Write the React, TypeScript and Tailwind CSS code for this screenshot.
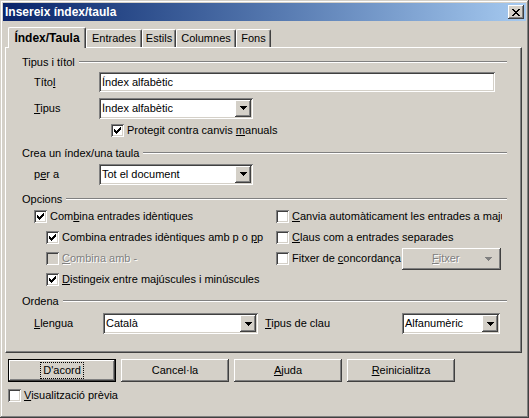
import type { ReactNode } from "react";

const font = "font-['Liberation_Sans',Arial,sans-serif] text-[11px] leading-none text-black";
const raised =
  "bg-[#d4d0c8] shadow-[inset_-1px_-1px_#404040,inset_1px_1px_#ffffff,inset_-2px_-2px_#808080,inset_2px_2px_#d4d0c8]";
const sunken =
  "shadow-[inset_1px_1px_#808080,inset_-1px_-1px_#ffffff,inset_2px_2px_#404040,inset_-2px_-2px_#d4d0c8]";
const etched = "text-[#808080] [text-shadow:1px_1px_0_#ffffff]";

function U({ children }: { children: ReactNode }) {
  return <span className="underline underline-offset-[1px]">{children}</span>;
}

function Check({ checked = false, disabled = false }: { checked?: boolean; disabled?: boolean }) {
  const px: [number, number][] = [
    [6, 0], [5, 1], [6, 1], [0, 2], [4, 2], [5, 2], [6, 2], [0, 3], [1, 3], [3, 3], [4, 3], [5, 3],
    [0, 4], [1, 4], [2, 4], [3, 4], [4, 4], [1, 5], [2, 5], [3, 5], [2, 6],
  ];
  return (
    <div className={`w-[13px] h-[13px] shrink-0 flex items-center justify-center ${sunken} ${disabled ? "bg-[#d4d0c8]" : "bg-white"}`}>
      {checked && (
        <svg width="7" height="7" viewBox="0 0 7 7" shapeRendering="crispEdges">
          {px.map(([x, y]) => (
            <rect key={`${x}-${y}`} x={x} y={y} width="1" height="1" fill="#000" />
          ))}
        </svg>
      )}
    </div>
  );
}

function CheckRow({ checked, disabled, children }: { checked?: boolean; disabled?: boolean; children: ReactNode }) {
  return (
    <div className="flex items-center gap-[3px] whitespace-nowrap">
      <Check checked={checked} disabled={disabled} />
      <span className={disabled ? etched : ""}>{children}</span>
    </div>
  );
}

function Arrow({ color = "#000" }: { color?: string }) {
  return (
    <svg width="7" height="4" viewBox="0 0 7 4" shapeRendering="crispEdges">
      <path d="M0 0h7v1H0zM1 1h5v1H1zM2 2h3v1H2zM3 3h1v1H3z" fill={color} />
    </svg>
  );
}

function Select({ value, width }: { value: string; width: string }) {
  return (
    <div className={`${width} h-[21px] bg-white ${sunken} flex items-center p-[2px]`}>
      <span className="flex-1 pl-[1px] whitespace-nowrap overflow-hidden">{value}</span>
      <div className={`w-[16px] h-[17px] ${raised} flex items-center justify-center`}>
        <Arrow />
      </div>
    </div>
  );
}

function Group({ title, className = "" }: { title: string; className?: string }) {
  return (
    <div className={`h-[14px] flex items-center pl-[16px] pr-[14px] ${className}`}>
      <span className="whitespace-nowrap">{title}</span>
      <div className="flex-1 ml-[4px] h-[2px] border-t border-[#808080] border-b border-b-white" />
    </div>
  );
}

function Button({ children, primary }: { children: ReactNode; primary?: boolean }) {
  if (primary) {
    return (
      <div className="w-[108px] h-[23px] border border-black">
        <div className={`w-full h-full ${raised} flex items-center justify-center`}>
          <span className="border border-dotted border-black px-[2px] py-[2px]">{children}</span>
        </div>
      </div>
    );
  }
  return <div className={`w-[108px] h-[23px] ${raised} flex items-center justify-center`}>{children}</div>;
}

export default function App() {
  const tabs = [
    { label: "Entrades", w: "w-[56px]" },
    { label: "Estils", w: "w-[34px]" },
    { label: "Columnes", w: "w-[60px]" },
    { label: "Fons", w: "w-[35px]" },
  ];
  return (
    <div
      className={`w-[529px] h-[418px] bg-[#d4d0c8] flex flex-col overflow-hidden ${font} shadow-[inset_-1px_-1px_#404040,inset_1px_1px_#d4d0c8,inset_-2px_-2px_#808080,inset_2px_2px_#ffffff]`}
    >
      {/* title bar */}
      <div className="mx-[3px] mt-[3px] h-[18px] bg-gradient-to-r from-[#0a246a] to-[#a6caf0] flex items-center pl-[2px] pr-[2px]">
        <span className="flex-1 font-bold text-white text-[12px]">Insereix índex/taula</span>
        <div className={`w-[16px] h-[14px] ${raised} flex items-center justify-center`}>
          <svg width="8" height="7" viewBox="0 0 8 7" shapeRendering="crispEdges">
            <path d="M0 0h2v1H0zM6 0h2v1H6zM1 1h2v1H1zM5 1h2v1H5zM2 2h4v1H2zM3 3h2v1H3zM2 4h4v1H2zM1 5h2v1H1zM5 5h2v1H5zM0 6h2v1H0zM6 6h2v1H6z" fill="#000" />
          </svg>
        </div>
      </div>

      {/* tabs */}
      <div className="mt-[6px] pl-[8px] h-[20px] flex items-end relative z-10">
        <div className="w-[78px] h-[21px] -mb-[1px] bg-[#d4d0c8] border-l border-t border-white border-r border-r-[#404040] rounded-t-[2px] shadow-[inset_-1px_0_#808080] flex items-center justify-center font-bold text-[12px] pb-[1px]">
          Índex/Taula
        </div>
        {tabs.map((t) => (
          <div
            key={t.label}
            className={`${t.w} h-[18px] bg-[#d4d0c8] border-l border-t border-white border-r border-r-[#404040] rounded-t-[2px] shadow-[inset_-1px_0_#808080] flex items-center justify-center`}
          >
            {t.label}
          </div>
        ))}
      </div>

      {/* panel */}
      <div className="mx-[5px] w-[517px] h-[306px] border border-t-white border-l-white border-r-[#404040] border-b-[#404040] shadow-[inset_-1px_-1px_#808080] flex flex-col">
        <Group title="Tipus i títol" className="mt-[7px]" />
        <div className="mt-[3px] h-[20px] flex items-center pl-[28px]">
          <span className="w-[65px]">
            Títo<U>l</U>
          </span>
          <div className={`w-[396px] h-[20px] bg-white ${sunken} flex items-center pl-[3px]`}>Índex alfabètic</div>
        </div>
        <div className="mt-[6px] h-[20px] flex items-center pl-[28px]">
          <span className="w-[65px]">
            <U>T</U>ipus
          </span>
          <Select value="Índex alfabètic" width="w-[154px]" />
        </div>
        <div className="mt-[2px] h-[20px] flex items-center pl-[105px]">
          <CheckRow checked>
            Protegit contra canvis <U>m</U>anuals
          </CheckRow>
        </div>

        <Group title="Crea un índex/una taula" className="mt-[6px]" />
        <div className="mt-[4px] h-[20px] flex items-center pl-[28px]">
          <span className="w-[65px]">
            p<U>e</U>r a
          </span>
          <Select value="Tot el document" width="w-[154px]" />
        </div>

        <Group title="Opcions" className="mt-[8px]" />
        <div className="h-[21px] flex items-center">
          <div className="w-[270px] pl-[28px]">
            <CheckRow checked>
              Com<U>b</U>ina entrades idèntiques
            </CheckRow>
          </div>
          <div className="w-[226px] overflow-hidden">
            <CheckRow>
              <U>C</U>anvia automàticament les entrades a majú
            </CheckRow>
          </div>
        </div>
        <div className="h-[21px] flex items-center">
          <div className="w-[270px] pl-[40px]">
            <CheckRow checked>
              Combina entrades idèntiques amb p o <U>p</U>p
            </CheckRow>
          </div>
          <div className="w-[225px] overflow-hidden">
            <CheckRow>
              <U>C</U>laus com a entrades separades
            </CheckRow>
          </div>
        </div>
        <div className="h-[21px] flex items-center">
          <div className="w-[270px] pl-[40px]">
            <CheckRow disabled>
              <U>C</U>ombina amb -
            </CheckRow>
          </div>
          <div className="w-[225px] flex items-center justify-between">
            <CheckRow>
              Fitxer de <U>c</U>oncordança
            </CheckRow>
            <div className={`w-[99px] h-[22px] ${raised} flex items-center pl-[30px] pr-[9px]`}>
              <span className={`flex-1 ${etched}`}>
                <U>F</U>itxer
              </span>
              <Arrow color="#808080" />
            </div>
          </div>
        </div>
        <div className="h-[21px] flex items-center">
          <div className="w-[270px] pl-[40px]">
            <CheckRow checked>
              <U>D</U>istingeix entre majúscules i minúscules
            </CheckRow>
          </div>
        </div>

        <Group title="Ordena" className="mt-[4px]" />
        <div className="mt-[5px] h-[21px] flex items-center pl-[28px]">
          <span className="w-[69px]">
            <U>L</U>lengua
          </span>
          <Select value="Català" width="w-[155px]" />
          <span className="ml-[7px] w-[137px]">
            <U>T</U>ipus de clau
          </span>
          <Select value="Alfanumèric" width="w-[98px]" />
        </div>
      </div>

      {/* buttons */}
      <div className="mt-[6px] pl-[8px] flex gap-[5px]">
        <Button primary>D'acord</Button>
        <Button>Cancel·la</Button>
        <Button>
          <U>A</U>juda
        </Button>
        <Button>
          <U>R</U>einicialitza
        </Button>
      </div>
      <div className="mt-[7px] pl-[8px]">
        <CheckRow>
          <U>V</U>isualització prèvia
        </CheckRow>
      </div>
    </div>
  );
}
